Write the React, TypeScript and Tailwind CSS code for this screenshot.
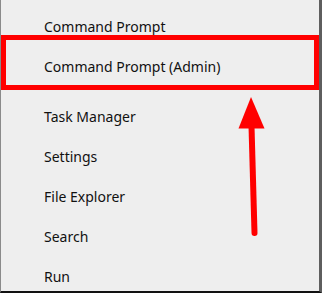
import React from "react";

const groups = [
  ["Command Prompt", "Command Prompt (Admin)"],
  ["Task Manager", "Settings", "File Explorer", "Search", "Run"],
];

export default function App() {
  return (
    <div className="relative w-[322px] h-[293px] overflow-hidden bg-[#eeeeee] border-l border-l-[#8a8a8a] border-r-[3px] border-r-[#5e5e5e] border-b-2 border-b-[#111111] font-['Noto_Sans',sans-serif] text-[14px] text-[#111111]">
      <div className="pt-[6px] flex flex-col gap-[10px]">
        {groups.map((items, i) => (
          <div key={i} className="flex flex-col">
            {items.map((label) => (
              <div key={label} className="h-10 flex items-center pl-[43px]">
                {label}
              </div>
            ))}
          </div>
        ))}
      </div>

      {/* highlight box */}
      <div className="absolute left-0 top-[35px] w-[318px] h-[55px] border-[5px] border-[#ff0000]" />

      {/* arrow */}
      <svg className="absolute left-[230px] top-[90px]" width="40" height="155" viewBox="0 0 40 155">
        <polygon points="20,7 33.5,38.5 7.5,38.5" fill="#ff0000" />
        <line x1="20.5" y1="36" x2="23.5" y2="143" stroke="#ff0000" strokeWidth="6" strokeLinecap="round" />
      </svg>
    </div>
  );
}
